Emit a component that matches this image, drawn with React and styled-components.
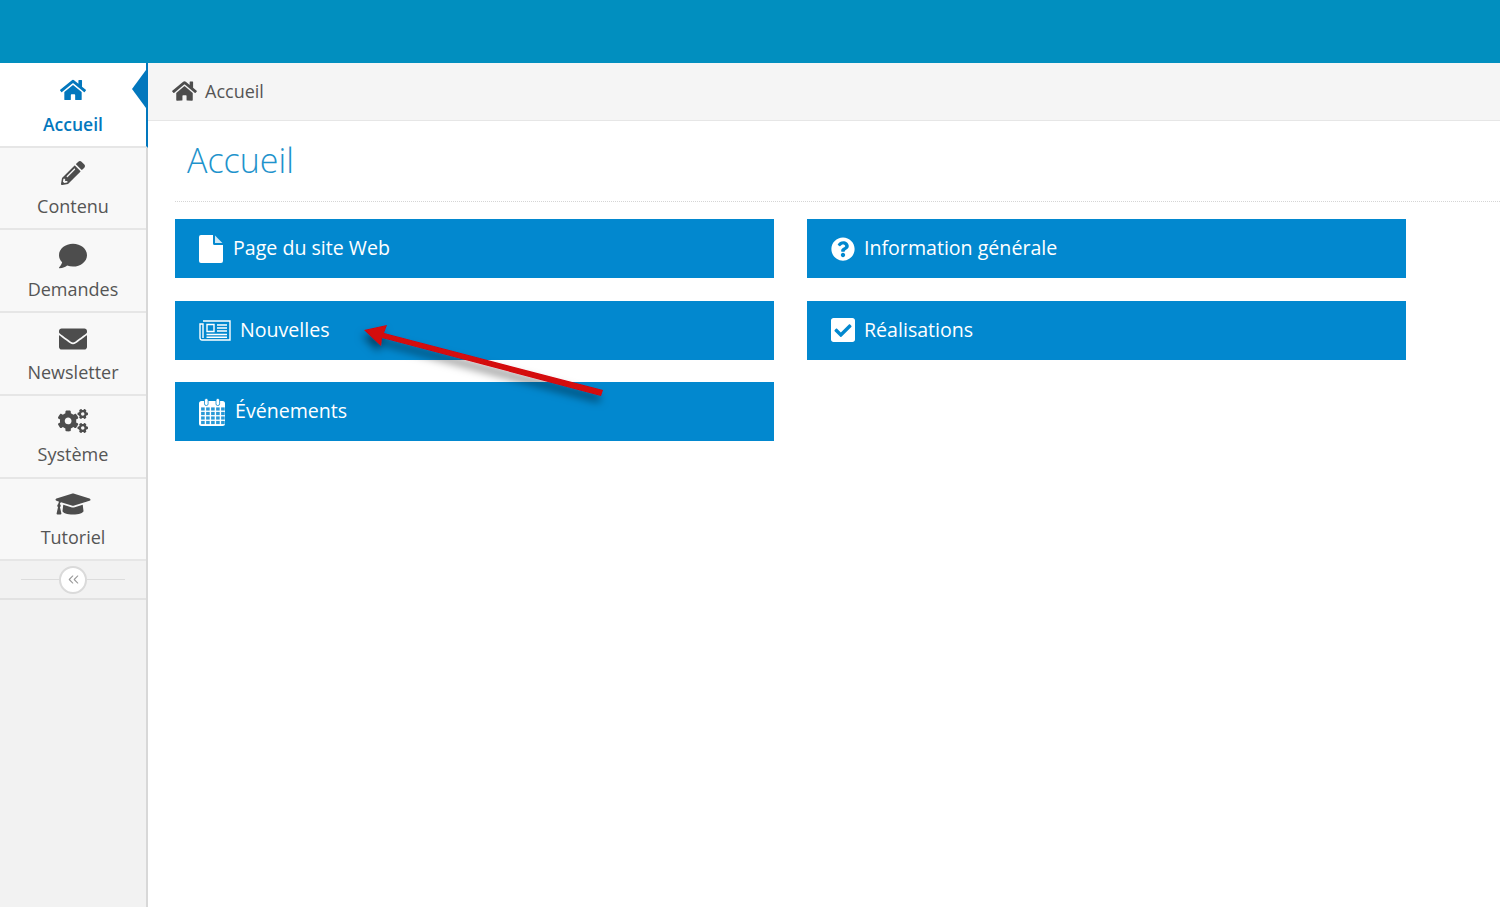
import React from "react";
import styled, { createGlobalStyle } from "styled-components";
import {
  FaHome,
  FaPencilAlt,
  FaComment,
  FaEnvelope,
  FaCogs,
  FaGraduationCap,
  FaQuestionCircle,
  FaCheckSquare,
} from "react-icons/fa";
import { ChevronsLeft } from "lucide-react";

const GlobalStyle = createGlobalStyle`
  html, body {
    margin: 0;
    padding: 0;
    height: 100%;
    background: #fff;
    overflow: hidden;
    font-family: "Open Sans", "Liberation Sans", sans-serif;
  }
  #root {
    height: 100%;
  }
`;

const Page = styled.div`
  position: relative;
  display: flex;
  flex-direction: column;
  height: 907px;
`;
const TopBar = styled.header`
  height: 63px;
  flex: none;
  background-color: #018fbf;
`;
const Body = styled.div`
  display: flex;
  flex: 1;
  min-height: 0;
`;
const Sidebar = styled.nav`
  width: 146px;
  flex: none;
  background-color: #f2f2f2;
  border-right: 2px solid #d8d8d8;
`;
const NavItem = styled.a`
  position: relative;
  box-sizing: border-box;
  display: flex;
  flex-direction: column;
  align-items: center;
  height: ${(p) => (p.$active ? "84.5px" : "82.8px")};
  padding-top: ${(p) => (p.$active ? "13px" : "11.5px")};
  margin-right: ${(p) => (p.$active ? "-2px" : "0")};
  background-color: ${(p) => (p.$active ? "#fff" : "#f8f8f8")};
  border-bottom: 2px solid #e6e6e6;
  border-right: ${(p) => (p.$active ? "2px solid #0277bd" : "none")};
  color: ${(p) => (p.$active ? "#0277bd" : "#555")};
  font-size: ${(p) => (p.$active ? "17.5px" : "18px")};
  font-weight: ${(p) => (p.$active ? 600 : 400)};
  line-height: 24px;
  svg {
    width: ${(p) => p.$iconWidth}px;
    height: 28px;
    color: ${(p) => (p.$active ? "#0277bd" : "#4d4d4d")};
    margin-bottom: ${(p) => (p.$active ? "8px" : "7px")};
  }
  ${(p) =>
    p.$active &&
    `&::after {
      content: "";
      position: absolute;
      right: 0;
      top: 7px;
      border-style: solid;
      border-width: 19px 14px 19px 0;
      border-color: transparent #0277bd transparent transparent;
    }`}
`;
const Collapse = styled.div`
  box-sizing: border-box;
  display: flex;
  align-items: center;
  justify-content: center;
  height: 38.5px;
  padding: 0 21px;
  border-bottom: 2px solid #e2e2e2;
`;
const CollapseLine = styled.span`
  flex: 1;
  height: 1px;
  background-color: #dcdcdc;
`;
const CollapseButton = styled.button`
  display: flex;
  align-items: center;
  justify-content: center;
  box-sizing: border-box;
  width: 28px;
  height: 28px;
  padding: 0;
  border: 2px solid #dadada;
  border-radius: 50%;
  background-color: #fff;
  color: #9a9a9a;
`;
const Main = styled.main`
  flex: 1;
  min-width: 0;
`;
const Breadcrumb = styled.div`
  display: flex;
  align-items: center;
  gap: 8px;
  box-sizing: border-box;
  height: 58px;
  padding: 0 0 2px 24px;
  background-color: #f5f5f5;
  border-bottom: 1px solid #e6e6e6;
  color: #555;
  font-size: 18px;
  svg {
    width: 25px;
    height: 22px;
    color: #4d4d4d;
  }
`;
const Content = styled.div`
  padding-left: 27px;
`;
const Title = styled.h1`
  margin: 0;
  box-sizing: border-box;
  height: 81px;
  padding: 17px 0 0 12px;
  border-bottom: 1px dotted #d5d5d5;
  color: #1f93cc;
  font-size: 34px;
  font-weight: 300;
  line-height: 44px;
`;
const Tiles = styled.div`
  display: grid;
  grid-template-columns: 599px 599px;
  grid-template-rows: repeat(3, 59px);
  grid-auto-flow: column;
  column-gap: 33px;
  row-gap: 22.6px;
  margin-top: 17px;
`;
const Tile = styled.a`
  display: flex;
  align-items: center;
  gap: ${(p) => p.$gap}px;
  padding: 0 0 2px 24px;
  background-color: #0288cf;
  color: #fff;
  font-size: 19.6px;
  svg {
    flex: none;
    width: ${(p) => p.$iconWidth}px;
    height: ${(p) => p.$iconHeight}px;
    margin-top: 2px;
  }
`;
const ArrowLayer = styled.svg`
  position: absolute;
  left: 0;
  top: 0;
  pointer-events: none;
`;

function PageIcon() {
  return (
    <svg viewBox="0 0 24 28" fill="#fff">
      <path d="M2 0H14V8.5a1.5 1.5 0 0 0 1.5 1.5H24V26a2 2 0 0 1-2 2H2a2 2 0 0 1-2-2V2a2 2 0 0 1 2-2Z" />
      <path d="M16 .6 23.4 8H16Z" opacity="0.8" />
    </svg>
  );
}

function NewsIcon() {
  return (
    <svg viewBox="0 0 32 21" fill="none" stroke="#fff" strokeWidth="1.4">
      <path d="M4 1H31V20H3a2 2 0 0 1-2-2V4H4V18" />
      <path d="M8 4.5H15V11.5H8Z" />
      <path d="M18 5H28M18 8H28M18 11H28M7.5 14.5H28M7.5 17.3H28" />
    </svg>
  );
}

function CalendarIcon() {
  const cols = [3, 8, 13, 18, 23];
  const rows = [11, 15.5, 20, 24.5];
  return (
    <svg viewBox="0 0 26 28" fill="#fff">
      <path d="M2.5 3H23.5A2.5 2.5 0 0 1 26 5.5V25.5A2.5 2.5 0 0 1 23.5 28H2.5A2.5 2.5 0 0 1 0 25.5V5.5A2.5 2.5 0 0 1 2.5 3Z" />
      <rect x="5.5" y="0.5" width="3.6" height="7" rx="1.6" stroke="#0288cf" strokeWidth="0.8" />
      <rect x="17" y="0.5" width="3.6" height="7" rx="1.6" stroke="#0288cf" strokeWidth="0.8" />
      {rows.map((y) =>
        cols.map((x) => (
          <rect key={`${x}-${y}`} x={x - 0.9} y={y - 1.6} width="3.6" height="3.2" fill="#2a99d6" />
        ))
      )}
    </svg>
  );
}

const navItems = [
  { label: "Accueil", Icon: FaHome, active: true, iconWidth: 26 },
  { label: "Contenu", Icon: FaPencilAlt, iconWidth: 24 },
  { label: "Demandes", Icon: FaComment, iconWidth: 28 },
  { label: "Newsletter", Icon: FaEnvelope, iconWidth: 28 },
  { label: "Système", Icon: FaCogs, iconWidth: 30 },
  { label: "Tutoriel", Icon: FaGraduationCap, iconWidth: 36 },
];

const tiles = [
  { label: "Page du site Web", Icon: PageIcon, gap: 10, iconWidth: 24, iconHeight: 28 },
  { label: "Nouvelles", Icon: NewsIcon, gap: 9, iconWidth: 32, iconHeight: 21 },
  { label: "Événements", Icon: CalendarIcon, gap: 10, iconWidth: 26, iconHeight: 28 },
  { label: "Information générale", Icon: FaQuestionCircle, gap: 9, iconWidth: 24, iconHeight: 24 },
  { label: "Réalisations", Icon: FaCheckSquare, gap: 9, iconWidth: 24, iconHeight: 28 },
];

export default function App() {
  return (
    <Page>
      <GlobalStyle />
      <TopBar />
      <Body>
        <Sidebar>
          {navItems.map(({ label, Icon, active, iconWidth }) => (
            <NavItem key={label} $active={active} $iconWidth={iconWidth}>
              <Icon />
              {label}
            </NavItem>
          ))}
          <Collapse>
            <CollapseLine />
            <CollapseButton>
              <ChevronsLeft size={17} strokeWidth={1.5} />
            </CollapseButton>
            <CollapseLine />
          </Collapse>
        </Sidebar>
        <Main>
          <Breadcrumb>
            <FaHome />
            Accueil
          </Breadcrumb>
          <Content>
            <Title>Accueil</Title>
            <Tiles>
              {tiles.map(({ label, Icon, gap, iconWidth, iconHeight }) => (
                <Tile key={label} $gap={gap} $iconWidth={iconWidth} $iconHeight={iconHeight}>
                  <Icon />
                  {label}
                </Tile>
              ))}
            </Tiles>
          </Content>
        </Main>
      </Body>
      <ArrowLayer width="1500" height="907" viewBox="0 0 1500 907">
        <defs>
          <filter id="arrowShadow" x="-20%" y="-50%" width="140%" height="220%">
            <feDropShadow dx="-2" dy="6" stdDeviation="4" floodColor="#000" floodOpacity="0.5" />
          </filter>
        </defs>
        <g filter="url(#arrowShadow)" fill="#d4070f">
          <polygon points="364,330 387,325 384,333 603,390 601,396 382,338 381,346" />
        </g>
      </ArrowLayer>
    </Page>
  );
}
